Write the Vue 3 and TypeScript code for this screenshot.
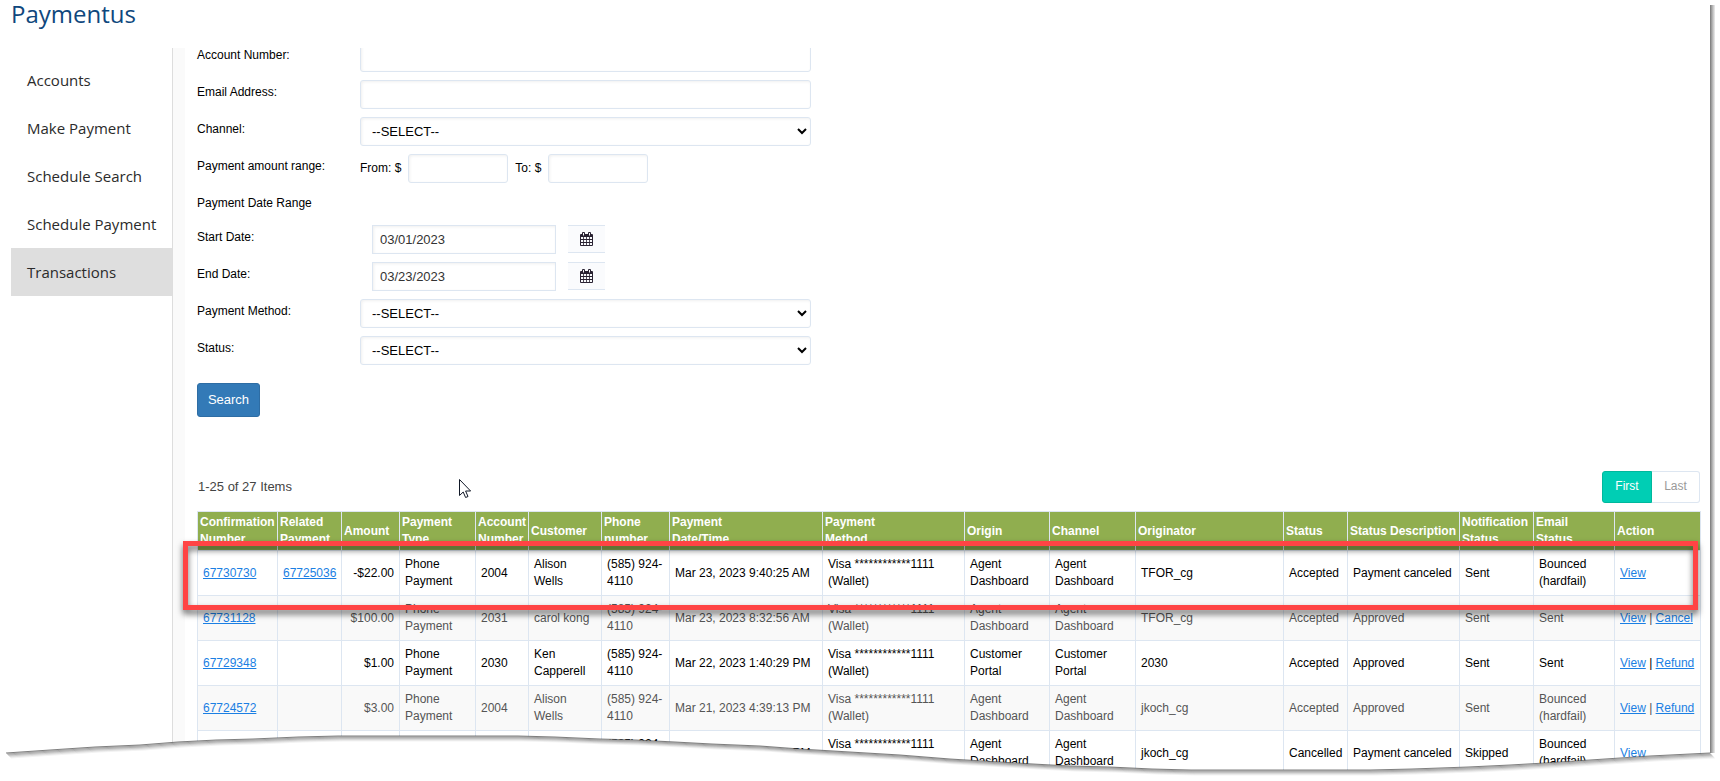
<script setup lang="ts">
import { ref } from 'vue'

interface Transaction {
  confirmation: string
  related: string
  amount: string
  account: string
  customer: string
  date: string
  origin: string
  originator: string
  status: string
  description: string
  notification: string
  email: string
  actions: string[]
}

const menu = ['Accounts', 'Make Payment', 'Schedule Search', 'Schedule Payment', 'Transactions']
const active = ref('Transactions')
const startDate = ref('03/01/2023')
const endDate = ref('03/23/2023')

const columns = [
  { title: 'Confirmation Number', width: 80 },
  { title: 'Related Payment', width: 64 },
  { title: 'Amount', width: 58 },
  { title: 'Payment Type', width: 76 },
  { title: 'Account Number', width: 53 },
  { title: 'Customer', width: 73 },
  { title: 'Phone number', width: 68 },
  { title: 'Payment Date/Time', width: 153 },
  { title: 'Payment Method', width: 142 },
  { title: 'Origin', width: 85 },
  { title: 'Channel', width: 86 },
  { title: 'Originator', width: 148 },
  { title: 'Status', width: 64 },
  { title: 'Status Description', width: 112 },
  { title: 'Notification Status', width: 74 },
  { title: 'Email Status', width: 81 },
  { title: 'Action', width: 86 },
]

const rows: Transaction[] = [
  { confirmation: '67730730', related: '67725036', amount: '-$22.00', account: '2004', customer: 'Alison Wells', date: 'Mar 23, 2023 9:40:25 AM', origin: 'Agent Dashboard', originator: 'TFOR_cg', status: 'Accepted', description: 'Payment canceled', notification: 'Sent', email: 'Bounced (hardfail)', actions: ['View'] },
  { confirmation: '67731128', related: '', amount: '$100.00', account: '2031', customer: 'carol kong', date: 'Mar 23, 2023 8:32:56 AM', origin: 'Agent Dashboard', originator: 'TFOR_cg', status: 'Accepted', description: 'Approved', notification: 'Sent', email: 'Sent', actions: ['View', 'Cancel'] },
  { confirmation: '67729348', related: '', amount: '$1.00', account: '2030', customer: 'Ken Capperell', date: 'Mar 22, 2023 1:40:29 PM', origin: 'Customer Portal', originator: '2030', status: 'Accepted', description: 'Approved', notification: 'Sent', email: 'Sent', actions: ['View', 'Refund'] },
  { confirmation: '67724572', related: '', amount: '$3.00', account: '2004', customer: 'Alison Wells', date: 'Mar 21, 2023 4:39:13 PM', origin: 'Agent Dashboard', originator: 'jkoch_cg', status: 'Accepted', description: 'Approved', notification: 'Sent', email: 'Bounced (hardfail)', actions: ['View', 'Refund'] },
  { confirmation: '', related: '', amount: '', account: '', customer: '', date: 'Mar 21, 2023 4:38:02 PM', origin: 'Agent Dashboard', originator: 'jkoch_cg', status: 'Cancelled', description: 'Payment canceled', notification: 'Skipped', email: 'Bounced (hardfail)', actions: ['View'] },
]

// Torn lower edge of the sheet; y is measured from the top of a 60px strip.
const edge = '6,32 50,29 95,26 140,24 178,21 216,19 253,18 298,16 338,15 400,15 518,15 555,16 600,18 636,19 675,21 712,23 760,25 800,28 850,31 900,34 950,38 1000,41 1033,43 1070,45 1110,46 1152,48 1191,49 1370,49 1412,48 1440,47 1468,46 1510,44 1545,42 1590,39 1650,35 1690,33 1710,32'
const shades = [0.5, 0.36, 0.3, 0.2, 0.12, 0.05]
</script>

<template>
  <div class="page">
    <h1 class="title">Paymentus</h1>
    <div class="body">
      <nav class="sidebar">
        <a
          v-for="item in menu"
          :key="item"
          href="#"
          class="nav-item"
          :class="{ active: item === active }"
          @click.prevent="active = item"
        >{{ item }}</a>
      </nav>
      <main class="pane">
        <form class="form" @submit.prevent>
          <div class="row">
            <label for="account">Account Number:</label>
            <input id="account" class="control" type="text" />
          </div>
          <div class="row">
            <label for="email">Email Address:</label>
            <input id="email" class="control" type="text" />
          </div>
          <div class="row">
            <label for="channel">Channel:</label>
            <select id="channel" class="control"><option>--SELECT--</option></select>
          </div>
          <div class="row">
            <span class="label">Payment amount range:</span>
            <div class="range">
              <label for="from">From: $</label>
              <input id="from" class="control small" type="text" />
              <label for="to">To: $</label>
              <input id="to" class="control small" type="text" />
            </div>
          </div>
          <div class="row heading"><span class="label">Payment Date Range</span></div>
          <div class="row">
            <label for="start">Start Date:</label>
            <div class="date">
              <input id="start" v-model="startDate" class="control" type="text" />
              <button type="button" class="calendar" aria-label="Pick start date">
                <svg viewBox="0 0 13 14" width="13" height="14"><path fill-rule="evenodd" d="M1 2h1V1q0-1 1-1h1q1 0 1 1v1h3V1q0-1 1-1h1q1 0 1 1v1h1q1 0 1 1v10q0 1-1 1H1q-1 0-1-1V3q0-1 1-1zM3 1v2.500h1V1zM9 1v2.500h1V1zM1 5v2h2.200V5zM4 5v2h2.200V5zM7 5v2h2.200V5zM10 5v2h2V5zM1 8v2h2.200V8zM4 8v2h2.200V8zM7 8v2h2.200V8zM10 8v2h2V8zM1 11v2h2.200v-2zM4 11v2h2.200v-2zM7 11v2h2.200v-2zM10 11v2h2v-2z" /></svg>
              </button>
            </div>
          </div>
          <div class="row">
            <label for="end">End Date:</label>
            <div class="date">
              <input id="end" v-model="endDate" class="control" type="text" />
              <button type="button" class="calendar" aria-label="Pick end date">
                <svg viewBox="0 0 13 14" width="13" height="14"><path fill-rule="evenodd" d="M1 2h1V1q0-1 1-1h1q1 0 1 1v1h3V1q0-1 1-1h1q1 0 1 1v1h1q1 0 1 1v10q0 1-1 1H1q-1 0-1-1V3q0-1 1-1zM3 1v2.500h1V1zM9 1v2.500h1V1zM1 5v2h2.200V5zM4 5v2h2.200V5zM7 5v2h2.200V5zM10 5v2h2V5zM1 8v2h2.200V8zM4 8v2h2.200V8zM7 8v2h2.200V8zM10 8v2h2V8zM1 11v2h2.200v-2zM4 11v2h2.200v-2zM7 11v2h2.200v-2zM10 11v2h2v-2z" /></svg>
              </button>
            </div>
          </div>
          <div class="row">
            <label for="method">Payment Method:</label>
            <select id="method" class="control"><option>--SELECT--</option></select>
          </div>
          <div class="row">
            <label for="status">Status:</label>
            <select id="status" class="control"><option>--SELECT--</option></select>
          </div>
          <button type="submit" class="search">Search</button>
        </form>

        <div class="toolbar">
          <span class="count">1-25 of 27 Items</span>
          <div class="pager">
            <button type="button" class="first">First</button>
            <button type="button" class="last">Last</button>
          </div>
        </div>

        <div class="table-wrap">
          <table>
            <colgroup>
              <col v-for="c in columns" :key="c.title" :style="{ width: c.width + 'px' }" />
            </colgroup>
            <thead>
              <tr>
                <th v-for="c in columns" :key="c.title" scope="col">
                  <span v-for="word in (c.title === 'Status Description' ? [c.title] : c.title.split(' '))" :key="word" class="word">{{ word }}</span>
                </th>
              </tr>
            </thead>
            <tbody>
              <tr v-for="(r, i) in rows" :key="i">
                <td><a href="#">{{ r.confirmation }}</a></td>
                <td><a v-if="r.related" href="#">{{ r.related }}</a></td>
                <td class="amount">{{ r.amount }}</td>
                <td><template v-if="r.account">Phone<br />Payment</template></td>
                <td>{{ r.account }}</td>
                <td>{{ r.customer }}</td>
                <td>(585) 924-<br />4110</td>
                <td>{{ r.date }}</td>
                <td>Visa ************1111<br />(Wallet)</td>
                <td>{{ r.origin }}</td>
                <td>{{ r.origin }}</td>
                <td>{{ r.originator }}</td>
                <td class="tight">{{ r.status }}</td>
                <td class="tight">{{ r.description }}</td>
                <td>{{ r.notification }}</td>
                <td>{{ r.email }}</td>
                <td class="tight">
                  <template v-for="(a, n) in r.actions" :key="a"><template v-if="n"> | </template><a href="#">{{ a }}</a></template>
                </td>
              </tr>
            </tbody>
          </table>
          <div class="highlight"></div>
        </div>

        <svg class="cursor" viewBox="0 0 12 19" width="12" height="19">
          <path d="M.5.500v16l3.700-3.500 2.400 5.500 2.400-1-2.400-5.500h5z" fill="#fff" stroke="#111827" />
        </svg>
      </main>
    </div>

    <div class="right-edge"></div>
    <svg class="torn" viewBox="0 0 1720 60" preserveAspectRatio="none">
      <polygon :points="`0,33 ${edge} 1720,32 1720,60 0,60`" fill="#fff" />
      <polyline
        v-for="(o, n) in shades"
        :key="n"
        :points="edge"
        :transform="`translate(${n} ${n})`"
        fill="none"
        stroke="#000"
        :stroke-opacity="o"
      />
    </svg>
  </div>
</template>

<style>
body {
  margin: 0;
  background: #fff;
}
</style>

<style scoped>
* {
  box-sizing: border-box;
}
.page {
  position: relative;
  display: flex;
  flex-direction: column;
  min-height: 100vh;
  background: #fff;
  color: #000;
  font: 12px/17px "Liberation Sans", Arial, sans-serif;
}
.title {
  margin: 0;
  height: 48px;
  padding-left: 11px;
  color: #0f477d;
  font: 400 24px/27px "Open Sans", "Noto Sans", sans-serif;
}
.body {
  flex: 1;
  display: flex;
  padding: 0 10px 0 11px;
}
.sidebar {
  flex: none;
  width: 162px;
  padding-top: 8px;
  border-right: 1px solid #ddd;
}
.nav-item {
  display: block;
  padding-left: 16px;
  color: #2b2b2b;
  font: 15px/48px "Open Sans", "Noto Sans", sans-serif;
  text-decoration: none;
  white-space: nowrap;
}
.nav-item.active {
  background: #dedede;
}
.pane {
  position: relative;
  flex: 1;
  min-width: 0;
  display: flow-root;
  clip-path: inset(0);
  padding: 0 10px 5px 12px;
  border-left: 12px solid #fafafa;
}
.form {
  display: flex;
  flex-direction: column;
  align-items: flex-start;
  gap: 8px;
  margin-top: -5px;
}
.row {
  display: flex;
  align-items: flex-start;
  height: 29px;
}
.row.heading {
  height: 26px;
}
.row > label,
.label {
  width: 163px;
  padding-top: 4px;
}
.control {
  width: 451px;
  height: 29px;
  margin: 0;
  padding: 0 8px;
  border: 1px solid #dde6f1;
  border-radius: 3px;
  background: #fff;
  box-shadow: inset 1px 1px 3px #f0f0f0;
  color: #000;
  font: 13px/17px "Liberation Sans", Arial, sans-serif;
}
select.control {
  padding: 0 0 0 7px;
}
.control.small {
  width: 100px;
}
.range {
  display: flex;
  align-items: center;
  gap: 7px;
}
.date {
  display: flex;
  gap: 12px;
  padding-left: 12px;
}
.date .control {
  width: 184px;
  padding: 0 7px;
  border-radius: 0;
  color: #333;
}
.calendar {
  display: flex;
  align-items: center;
  justify-content: center;
  width: 37px;
  height: 28px;
  padding: 0;
  border: solid #dde6f1;
  border-width: 1px 0;
  background: #fafbfd;
}
.calendar path {
  fill: #2a2333;
}
.search {
  width: 63px;
  height: 34px;
  margin-top: 10px;
  padding: 0 0 2px;
  border: 1px solid #2e6da4;
  border-radius: 3px;
  background: #337ab7;
  color: #fff;
  font: 13px/17px "Liberation Sans", Arial, sans-serif;
}
.toolbar {
  display: flex;
  align-items: center;
  justify-content: space-between;
  margin: 54px 0 8px;
}
.count {
  padding: 0 0 2px 1px;
  color: #444;
  font-size: 13px;
}
.pager {
  display: flex;
}
.pager button {
  height: 32px;
  padding: 0 0 2px;
  font: 12px/17px "Liberation Sans", Arial, sans-serif;
}
.pager .first {
  width: 50px;
  border: 1px solid #00b89c;
  border-radius: 3px 0 0 3px;
  background: #00ceb4;
  color: #fff;
}
.pager .last {
  width: 48px;
  border: 1px solid #dde6f1;
  border-left: 0;
  border-radius: 0 3px 3px 0;
  background: #fff;
  color: #999;
}
.table-wrap {
  position: relative;
}
table {
  width: 100%;
  table-layout: fixed;
  border-collapse: collapse;
}
th,
td {
  border: 1px solid #dde6f1;
  text-align: left;
  vertical-align: middle;
}
th {
  padding: 2px;
  background: #90ae4f;
  color: #fff;
  white-space: nowrap;
}
.word {
  display: block;
}
td {
  height: 45px;
  padding: 5px;
}
td.tight {
  padding-right: 0;
  white-space: nowrap;
}
td.amount {
  text-align: right;
}
tbody tr:nth-child(even) {
  background: #f9f9f9;
  color: #555;
}
td a {
  color: #1b7fe3;
  text-decoration: underline;
}
.highlight {
  position: absolute;
  top: 30px;
  right: 2px;
  left: -14px;
  height: 69px;
  border: 5px solid #ff4444;
  filter: drop-shadow(0 4px 3px rgba(0, 0, 0, 0.6));
  pointer-events: none;
}
.cursor {
  position: absolute;
  top: 431px;
  left: 274px;
}
.right-edge {
  position: absolute;
  top: 5px;
  right: 5px;
  bottom: 28px;
  width: 5px;
  background: linear-gradient(to right, #777, #aaa 40%, #eee);
}
.torn {
  position: absolute;
  bottom: 0;
  left: 0;
  width: 100%;
  height: 60px;
}
</style>
